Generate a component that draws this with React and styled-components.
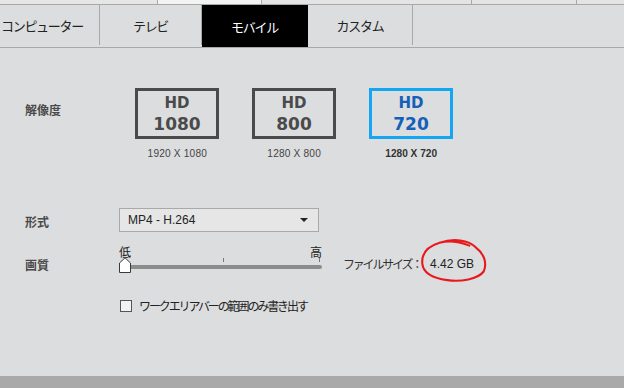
import React from "react";
import styled, { createGlobalStyle } from "styled-components";

const GlobalStyle = createGlobalStyle`
  html, body {
    margin: 0;
    padding: 0;
    background: #dcdddf;
  }
  body {
    font-family: "Noto Sans CJK JP", "Liberation Sans", sans-serif;
    color: #333;
  }
`;

const tabs = [
  { label: "コンピューター", width: 100, left: true },
  { label: "テレビ", width: 102 },
  { label: "モバイル", width: 106, active: true },
  { label: "カスタム", width: 105 },
];

const strip = [
  { width: 158, tone: "#e6e6e6" },
  { width: 104, tone: "#f3f3f3" },
  { width: 210, tone: "#e4e4e4" },
  { width: 105, tone: "#e4e4e4" },
];

const presets = [
  { top: "HD", size: "1080", caption: "1920 X 1080" },
  { top: "HD", size: "800", caption: "1280 X 800" },
  { top: "HD", size: "720", caption: "1280 X 720", selected: true },
];

export default function App() {
  return (
    <>
      <GlobalStyle />
      <Page>
        <TopStrip>
          {strip.map((s, i) => (
            <StripCell key={i} $w={s.width} $tone={s.tone} />
          ))}
        </TopStrip>
        <TabBar>
          {tabs.map((t) => (
            <Tab key={t.label} $w={t.width} $active={t.active} $left={t.left}>
              {t.label}
            </Tab>
          ))}
        </TabBar>

        <Content>
          <Row $mt={40}>
            <Label $mt={13}>解像度</Label>
            <Presets>
              {presets.map((p) => (
                <Preset key={p.size}>
                  <PresetBox $selected={p.selected}>
                    <span>{p.top}</span>
                    <Big>{p.size}</Big>
                  </PresetBox>
                  <Caption $selected={p.selected}>{p.caption}</Caption>
                </Preset>
              ))}
            </Presets>
          </Row>

          <Row $mt={49}>
            <Label $mt={5}>形式</Label>
            <Select>
              <span>MP4 - H.264</span>
              <Caret />
            </Select>
          </Row>

          <Row $mt={13}>
            <Label $mt={11}>画質</Label>
            <QualityLine>
              <Slider>
                <Ends>
                  <span>低</span>
                  <span>高</span>
                </Ends>
                <Track>
                  <Tick style={{ left: "50%" }} />
                  <Tick style={{ left: "calc(100% - 3px)" }} />
                  <Thumb viewBox="0 0 12 16">
                    <path
                      d="M0.5 15.5 V6 L6 0.8 L11.5 6 V15.5 Z"
                      fill="#fff"
                      stroke="#3a3a3a"
                    />
                  </Thumb>
                </Track>
              </Slider>
              <FileSize>
                <SizeLabel>ファイルサイズ：</SizeLabel>
                <Value>
                  4.42 GB
                  <Scribble viewBox="0 0 72 48">
                    <path
                      d="M22 6 C37 1, 52 3, 60 11 C68 17, 72 27, 68 36 C62 44, 44 47, 30 45 C16 43, 5 38, 4 28 C3 18, 9 10, 22 6 C32 3, 43 5, 53 9"
                      fill="none"
                      stroke="#e8191c"
                      strokeWidth="2.2"
                      strokeLinecap="round"
                    />
                  </Scribble>
                </Value>
              </FileSize>
            </QualityLine>
          </Row>

          <Row $mt={21}>
            <span />
            <CheckLine>
              <Box />
              ワークエリアバーの範囲のみ書き出す
            </CheckLine>
          </Row>
        </Content>

        <BottomBar />
      </Page>
    </>
  );
}

const Page = styled.div`
  width: 624px;
  height: 388px;
  display: flex;
  flex-direction: column;
  overflow: hidden;
`;

const TopStrip = styled.div`
  height: 4px;
  display: flex;
  background: #e4e4e4;
  border-bottom: 1px solid #a9a9a9;
`;

const StripCell = styled.div`
  width: ${(p) => p.$w}px;
  box-sizing: border-box;
  background: ${(p) => p.$tone};
  border-right: 1px solid #a9a9a9;
`;

const TabBar = styled.div`
  height: 42px;
  display: flex;
  border-bottom: 1px solid #a9a9a9;
`;

const Tab = styled.div`
  width: ${(p) => p.$w}px;
  box-sizing: border-box;
  display: flex;
  align-items: center;
  justify-content: ${(p) => (p.$left ? "flex-start" : "center")};
  padding: 1px 0 0 ${(p) => (p.$left ? "1px" : "0")};
  font-size: 13px;
  letter-spacing: -1.3px;
  color: ${(p) => (p.$active ? "#fff" : "#222")};
  background: ${(p) => (p.$active ? "#000" : "transparent")};
  border-right: 1px solid ${(p) => (p.$active ? "#000" : "#a9a9a9")};
  margin-bottom: ${(p) => (p.$active ? "0" : "2px")};
`;

const Content = styled.div`
  flex: 1;
  padding-left: 25px;
`;

const Row = styled.div`
  display: grid;
  grid-template-columns: 94px auto;
  align-items: start;
  margin-top: ${(p) => p.$mt}px;
`;

const Label = styled.div`
  margin-top: ${(p) => p.$mt}px;
  font-size: 12px;
  font-weight: bold;
  color: #4a4a4a;
`;

const Presets = styled.div`
  display: flex;
  gap: 33px;
  margin-left: 16px;
`;

const Preset = styled.div`
  width: 84px;
  display: flex;
  flex-direction: column;
  align-items: center;
`;

const PresetBox = styled.div`
  width: 84px;
  height: 51px;
  box-sizing: border-box;
  border: 3px solid ${(p) => (p.$selected ? "#14a5f5" : "#4a4a4a")};
  display: flex;
  flex-direction: column;
  align-items: center;
  justify-content: center;
  font-family: "DejaVu Sans", Verdana, sans-serif;
  font-weight: bold;
  font-size: 15px;
  line-height: 21px;
  color: ${(p) => (p.$selected ? "#1460b8" : "#4a4a4a")};
`;

const Big = styled.span`
  font-size: 17px;
`;

const Caption = styled.div`
  margin-top: 8px;
  font-family: "Liberation Sans", sans-serif;
  font-size: 11px;
  letter-spacing: ${(p) => (p.$selected ? "0" : "0.2px")};
  font-weight: ${(p) => (p.$selected ? "bold" : "normal")};
  color: ${(p) => (p.$selected ? "#333" : "#444")};
  transform: scaleX(0.92);
`;

const Select = styled.div`
  width: 200px;
  height: 24px;
  box-sizing: border-box;
  border: 1px solid #a9a9a9;
  background: #e6e6e6;
  display: flex;
  align-items: center;
  justify-content: space-between;
  padding: 0 10px 0 8px;
  font-family: "Liberation Sans", sans-serif;
  font-size: 12px;
  color: #222;
`;

const Caret = styled.span`
  width: 0;
  height: 0;
  border-left: 4px solid transparent;
  border-right: 4px solid transparent;
  border-top: 4px solid #222;
`;

const QualityLine = styled.div`
  display: flex;
  align-items: flex-end;
`;

const Slider = styled.div`
  width: 203px;
  display: flex;
  flex-direction: column;
`;

const Ends = styled.div`
  display: flex;
  justify-content: space-between;
  font-size: 12px;
  line-height: 14px;
  color: #222;
`;

const Track = styled.div`
  position: relative;
  height: 4px;
  margin: 6px 0 7px 4px;
  background: #8c8c8c;
  border-radius: 2px;
`;

const Tick = styled.span`
  position: absolute;
  top: -7px;
  width: 1px;
  height: 4px;
  background: #777;
`;

const Thumb = styled.svg`
  position: absolute;
  left: -4px;
  top: -8px;
  width: 12px;
  height: 16px;
`;

const FileSize = styled.div`
  margin-left: 21px;
  margin-bottom: 4px;
  font-size: 12px;
  color: #333;
  display: flex;
  align-items: center;
`;

const SizeLabel = styled.span`
  letter-spacing: -2.2px;
`;

const Value = styled.span`
  position: relative;
  margin-left: 9px;
  font-family: "Liberation Sans", sans-serif;
  font-size: 12px;
  color: #222;
`;

const Scribble = styled.svg`
  position: absolute;
  left: -12px;
  top: -20px;
  width: 70px;
  height: 46px;
  overflow: visible;
`;

const CheckLine = styled.label`
  display: flex;
  align-items: center;
  gap: 6px;
  font-size: 12px;
  letter-spacing: -2.1px;
  color: #222;
  margin-left: 1px;
`;

const Box = styled.span`
  width: 12px;
  height: 12px;
  box-sizing: border-box;
  border: 1px solid #555;
  background: #f2f2f2;
  margin-right: 1px;
`;

const BottomBar = styled.div`
  height: 12px;
  background: #a9a9a9;
`;
